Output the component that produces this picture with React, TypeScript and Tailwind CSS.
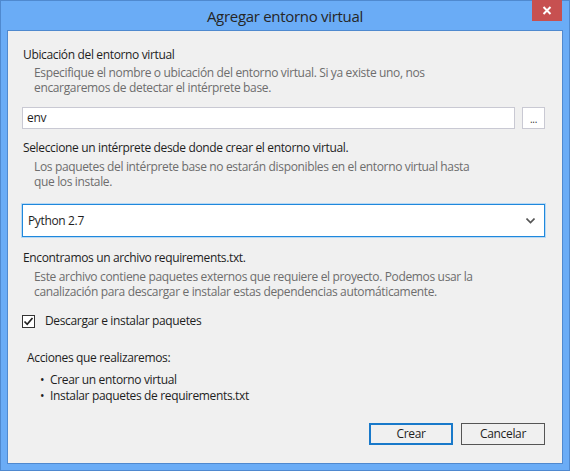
import React from "react";

const font = { fontFamily: '"Open Sans", "Noto Sans", sans-serif' };

export default function App() {
  return (
    <div
      className="w-[570px] h-[471px] bg-[#6aacf6] border border-[#4f89cf] flex flex-col text-[12px] antialiased"
      style={font}
    >
      {/* Title bar */}
      <div className="relative h-[29px] flex items-center justify-center shrink-0">
        <span className="text-[15px] text-[#262626] tracking-[-0.3px] pt-[2px]">Agregar entorno virtual</span>
        <div className="absolute top-[-1px] right-[7px] w-[30px] h-[21px] bg-[#c75050] flex items-center justify-center">
          <svg width="10" height="9" viewBox="0 0 10 9">
            <path d="M1.5 1 L8.5 8 M8.5 1 L1.5 8" stroke="#fff" strokeWidth="2" />
          </svg>
        </div>
      </div>

      {/* Content panel */}
      <div className="mx-[6px] h-[434px] border border-[#4f89cf] bg-[#f0f0f0] flex flex-col pl-[14px] pr-[17px] pt-[16px] pb-[18px] text-[#1e1e1e] tracking-[-0.35px]">
        <div className="leading-[16px] pl-[1px]">Ubicación del entorno virtual</div>
        <div className="mt-[2px] pl-[12px] text-[#6d6d6d] leading-[15px]">
          <div className="whitespace-nowrap">Especifique el nombre o ubicación del entorno virtual. Si ya existe uno, nos</div>
          <div className="whitespace-nowrap">encargaremos de detectar el intérprete base.</div>
        </div>

        <div className="mt-[12px] flex gap-[7px] h-[22px]">
          <div className="flex-1 bg-white border border-[#c9c9d3] flex items-center pl-[4px]">env</div>
          <div className="w-[23px] bg-white border border-[#c9c9d3] flex items-end justify-center pb-[4px] text-[10px] leading-[10px] text-[#333]">
            ...
          </div>
        </div>

        <div className="mt-[11px] leading-[16px] pl-[1px]">Seleccione un intérprete desde donde crear el entorno virtual.</div>
        <div className="mt-[3px] pl-[12px] text-[#6d6d6d] leading-[15px]">
          <div className="whitespace-nowrap">Los paquetes del intérprete base no estarán disponibles en el entorno virtual hasta</div>
          <div className="whitespace-nowrap">que los instale.</div>
        </div>

        <div className="mt-[15px] h-[33px] bg-white border border-[#1f88dc] shadow-[0_0_0_1px_#b9d9f4] flex items-center pl-[5px] pr-[9px]">
          <span className="flex-1">Python 2.7</span>
          <svg width="9" height="6" viewBox="0 0 9 6">
            <path d="M0.5 0.5 L4.5 4.5 L8.5 0.5" stroke="#555" strokeWidth="1.6" fill="none" />
          </svg>
        </div>

        <div className="mt-[13px] leading-[16px] pl-[1px]">Encontramos un archivo requirements.txt.</div>
        <div className="mt-[3px] pl-[12px] text-[#6d6d6d] leading-[15px]">
          <div className="whitespace-nowrap">Este archivo contiene paquetes externos que requiere el proyecto. Podemos usar la</div>
          <div className="whitespace-nowrap">canalización para descargar e instalar estas dependencias automáticamente.</div>
        </div>

        <div className="mt-[14px] flex items-center h-[16px]">
          <div className="w-[13px] h-[13px] border border-[#333] bg-white flex items-center justify-center">
            <svg width="11" height="11" viewBox="0 0 11 11">
              <path d="M1.5 5.5 L4.2 8.3 L9.5 2" stroke="#222" strokeWidth="1.7" fill="none" />
            </svg>
          </div>
          <span className="ml-[10px] leading-[16px]">Descargar e instalar paquetes</span>
        </div>

        <div className="mt-[21px] ml-[5px] leading-[16px]">Acciones que realizaremos:</div>
        <div className="mt-[6px] ml-[18px] leading-[16px]">
          <div className="flex">
            <span className="w-[10px]">•</span>
            <span>Crear un entorno virtual</span>
          </div>
          <div className="flex">
            <span className="w-[10px]">•</span>
            <span>Instalar paquetes de requirements.txt</span>
          </div>
        </div>

        <div className="mt-auto flex justify-end gap-[8px]">
          <button className="w-[84px] h-[22px] border border-[#1979ca] shadow-[inset_0_0_0_1px_#1979ca] bg-[#f0f0f0] text-[#1e1e1e] flex items-center justify-center">
            Crear
          </button>
          <button className="w-[84px] h-[22px] border border-[#555] bg-[#f0f0f0] text-[#1e1e1e] flex items-center justify-center">
            Cancelar
          </button>
        </div>
      </div>
    </div>
  );
}
